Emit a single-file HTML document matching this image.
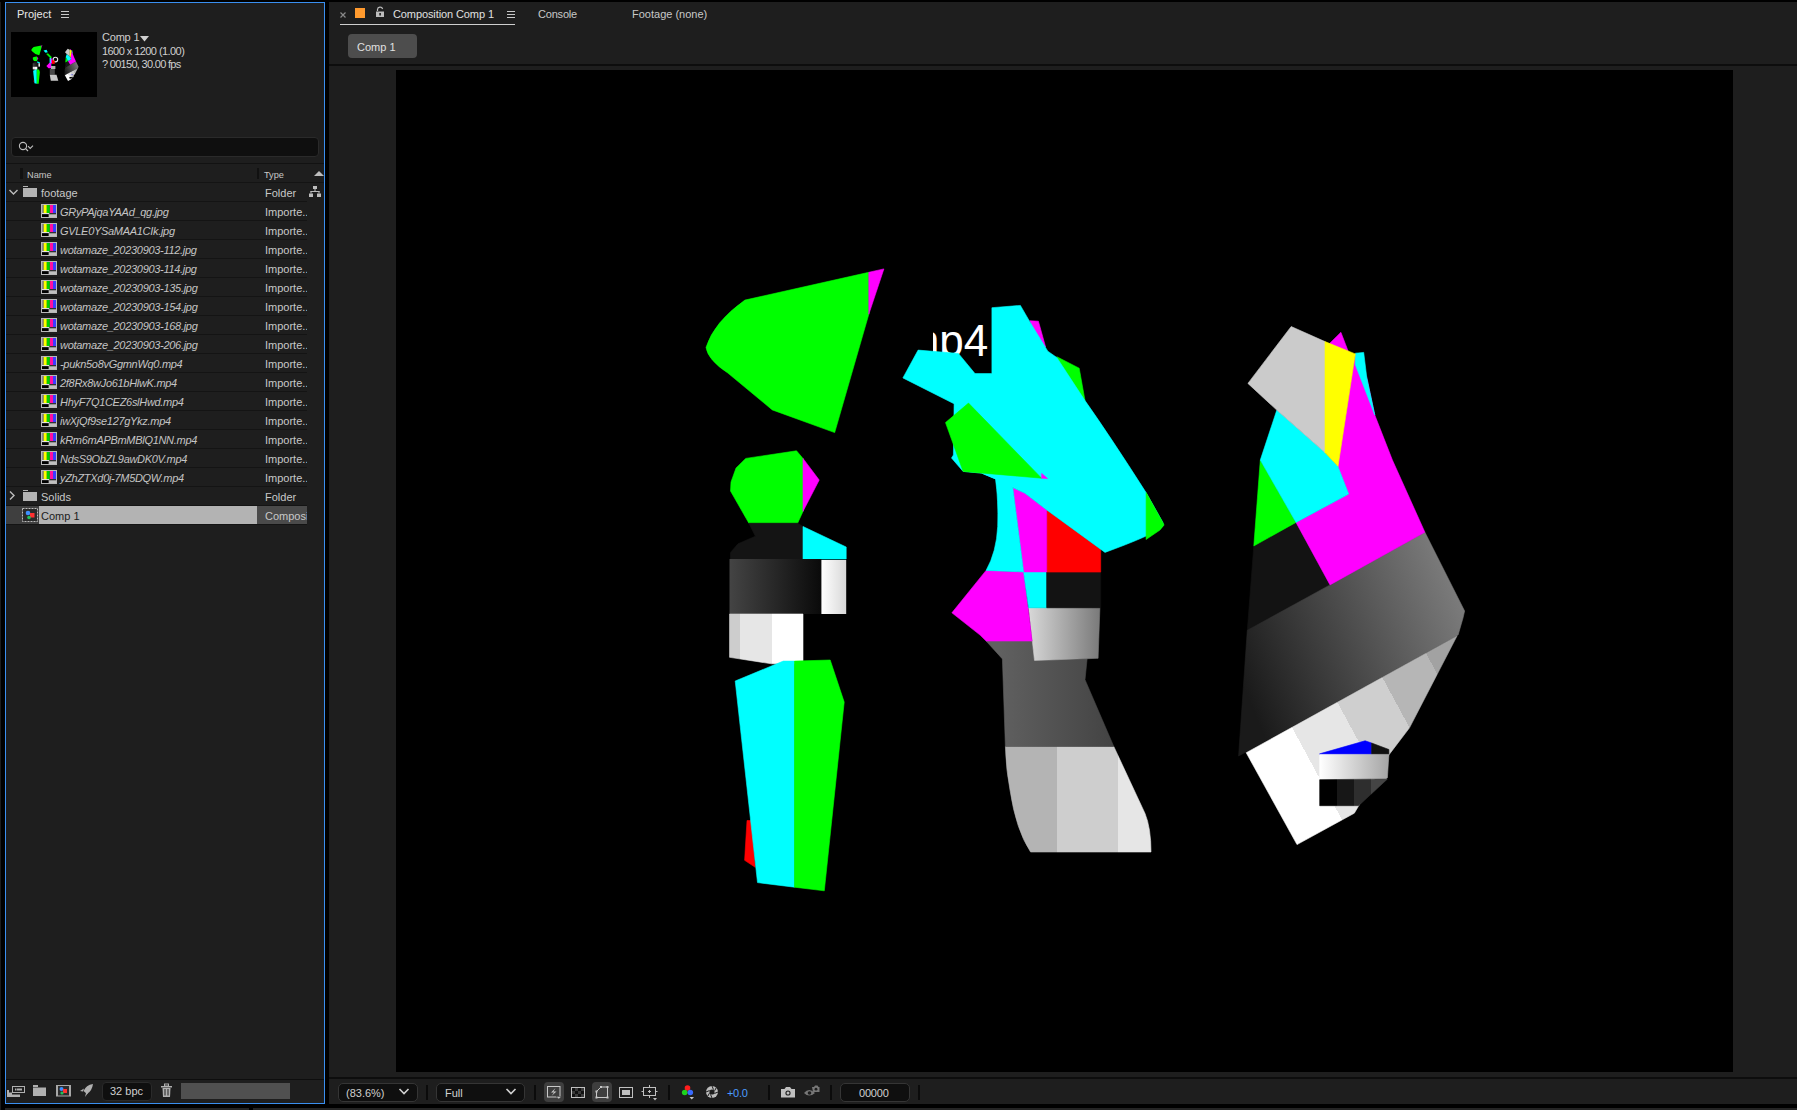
<!DOCTYPE html>
<html><head><meta charset="utf-8">
<style>
*{margin:0;padding:0;box-sizing:border-box}
html,body{width:1797px;height:1110px;overflow:hidden;background:#000;font-family:"Liberation Sans",sans-serif;color:#c8c8c8;position:relative}
.abs{position:absolute}
.t{position:absolute;white-space:nowrap;font-size:11px;line-height:13px}
.it{font-style:italic;color:#c4c4c4;letter-spacing:-0.3px}
.ic{position:absolute}
</style></head><body>
<!-- project panel -->
<div class="abs" style="left:5px;top:2px;width:320px;height:1102px;background:#1e1e1e;border:1px solid #3a8ff0"></div>
<div class="t" style="left:17px;top:8px;color:#e8e8e8">Project</div>
<svg class="ic" style="left:60px;top:10px" width="10" height="10"><rect x="1" y="1" width="8" height="1" fill="#c8c8c8"/><rect x="1" y="4" width="8" height="1" fill="#c8c8c8"/><rect x="1" y="7" width="8" height="1" fill="#c8c8c8"/></svg>
<div class="abs" style="left:11px;top:32px;width:86px;height:65px;background:#000"></div>
<div class="t" style="left:102px;top:31px;color:#cfcfcf;letter-spacing:-0.2px">Comp 1</div>
<svg class="ic" style="left:139px;top:35px" width="11" height="8"><path d="M1 1 L10 1 L5.5 6.5 Z" fill="#cfcfcf"/></svg>
<div class="t" style="left:102px;top:45px;color:#cfcfcf;letter-spacing:-0.56px">1600 x 1200 (1.00)</div>
<div class="t" style="left:102px;top:58px;color:#cfcfcf;letter-spacing:-0.7px">? 00150, 30.00 fps</div>
<div class="abs" style="left:11px;top:137px;width:308px;height:20px;background:#0f0f0f;border:1px solid #2a2a2a;border-radius:4px"></div>
<svg class="ic" style="left:17px;top:140px" width="20" height="14"><circle cx="6" cy="6" r="3.6" fill="none" stroke="#bdbdbd" stroke-width="1.1"/><path d="M8.6 8.6 L11 11" stroke="#bdbdbd" stroke-width="1.2"/><path d="M11 6.2 L13.2 8.4 L16 5.6" fill="none" stroke="#bdbdbd" stroke-width="1.1"/></svg>
<div class="abs" style="left:6px;top:163px;width:318px;height:1px;background:#121212"></div>
<div class="abs" style="left:20px;top:168px;width:3px;height:11px;background:#111"></div>
<div class="t" style="left:27px;top:169px;font-size:9.2px;color:#c8c8c8;letter-spacing:0px">Name</div>
<div class="abs" style="left:257px;top:168px;width:2px;height:11px;background:#111"></div>
<div class="t" style="left:264px;top:169px;font-size:9.2px;color:#c8c8c8">Type</div>
<svg class="ic" style="left:313px;top:170px" width="11" height="7"><path d="M1 6 L6 1 L11 6 Z" fill="#bdbdbd"/></svg>
<div class="abs" style="left:6px;top:182px;width:318px;height:1px;background:#141414"></div>
<div class="abs" style="left:6px;top:201px;width:301px;height:1px;background:#141414"></div>
<div class="abs" style="left:6px;top:220px;width:301px;height:1px;background:#141414"></div>
<div class="abs" style="left:6px;top:239px;width:301px;height:1px;background:#141414"></div>
<div class="abs" style="left:6px;top:258px;width:301px;height:1px;background:#141414"></div>
<div class="abs" style="left:6px;top:277px;width:301px;height:1px;background:#141414"></div>
<div class="abs" style="left:6px;top:296px;width:301px;height:1px;background:#141414"></div>
<div class="abs" style="left:6px;top:315px;width:301px;height:1px;background:#141414"></div>
<div class="abs" style="left:6px;top:334px;width:301px;height:1px;background:#141414"></div>
<div class="abs" style="left:6px;top:353px;width:301px;height:1px;background:#141414"></div>
<div class="abs" style="left:6px;top:372px;width:301px;height:1px;background:#141414"></div>
<div class="abs" style="left:6px;top:391px;width:301px;height:1px;background:#141414"></div>
<div class="abs" style="left:6px;top:410px;width:301px;height:1px;background:#141414"></div>
<div class="abs" style="left:6px;top:429px;width:301px;height:1px;background:#141414"></div>
<div class="abs" style="left:6px;top:448px;width:301px;height:1px;background:#141414"></div>
<div class="abs" style="left:6px;top:467px;width:301px;height:1px;background:#141414"></div>
<div class="abs" style="left:6px;top:486px;width:301px;height:1px;background:#141414"></div>
<div class="abs" style="left:6px;top:505px;width:301px;height:1px;background:#141414"></div>
<div class="abs" style="left:6px;top:524px;width:301px;height:1px;background:#141414"></div>
<div class="t" style="left:41px;top:187px;color:#c8c8c8">footage</div>
<div class="t" style="left:265px;top:187px;color:#c8c8c8">Folder</div>
<svg class="ic" style="left:41px;top:204px" width="16" height="14" viewBox="0 0 16 14"><rect x="0.5" y="0.5" width="15" height="13" fill="#2a2a2a" stroke="#b8b8b8"/><rect x="1" y="1" width="1.7" height="8" fill="#8a8a8a"/><rect x="2.7" y="1" width="3.1" height="8" fill="#ffff00"/><rect x="5.8" y="1" width="3.1" height="8" fill="#00d000"/><rect x="8.9" y="1" width="3.1" height="8" fill="#ff10a0"/><rect x="12" y="1" width="3" height="8" fill="#3c3cff"/><rect x="1" y="9" width="7.5" height="1.3" fill="#e0e0e0"/><rect x="8.5" y="9" width="6.5" height="1.3" fill="#303030"/><rect x="1" y="10.3" width="6.7" height="2.7" fill="#000"/><rect x="7.7" y="10.3" width="7.3" height="2.7" fill="#c0c0c0"/></svg>
<div class="t it" style="left:60px;top:206px">GRyPAjqaYAAd_qg.jpg</div>
<div class="abs" style="left:265px;top:206px;width:42px;height:14px;overflow:hidden"><div class="t" style="left:0;top:0;color:#c8c8c8">Importe..</div></div>
<svg class="ic" style="left:41px;top:223px" width="16" height="14" viewBox="0 0 16 14"><rect x="0.5" y="0.5" width="15" height="13" fill="#2a2a2a" stroke="#b8b8b8"/><rect x="1" y="1" width="1.7" height="8" fill="#8a8a8a"/><rect x="2.7" y="1" width="3.1" height="8" fill="#ffff00"/><rect x="5.8" y="1" width="3.1" height="8" fill="#00d000"/><rect x="8.9" y="1" width="3.1" height="8" fill="#ff10a0"/><rect x="12" y="1" width="3" height="8" fill="#3c3cff"/><rect x="1" y="9" width="7.5" height="1.3" fill="#e0e0e0"/><rect x="8.5" y="9" width="6.5" height="1.3" fill="#303030"/><rect x="1" y="10.3" width="6.7" height="2.7" fill="#000"/><rect x="7.7" y="10.3" width="7.3" height="2.7" fill="#c0c0c0"/></svg>
<div class="t it" style="left:60px;top:225px">GVLE0YSaMAA1CIk.jpg</div>
<div class="abs" style="left:265px;top:225px;width:42px;height:14px;overflow:hidden"><div class="t" style="left:0;top:0;color:#c8c8c8">Importe..</div></div>
<svg class="ic" style="left:41px;top:242px" width="16" height="14" viewBox="0 0 16 14"><rect x="0.5" y="0.5" width="15" height="13" fill="#2a2a2a" stroke="#b8b8b8"/><rect x="1" y="1" width="1.7" height="8" fill="#8a8a8a"/><rect x="2.7" y="1" width="3.1" height="8" fill="#ffff00"/><rect x="5.8" y="1" width="3.1" height="8" fill="#00d000"/><rect x="8.9" y="1" width="3.1" height="8" fill="#ff10a0"/><rect x="12" y="1" width="3" height="8" fill="#3c3cff"/><rect x="1" y="9" width="7.5" height="1.3" fill="#e0e0e0"/><rect x="8.5" y="9" width="6.5" height="1.3" fill="#303030"/><rect x="1" y="10.3" width="6.7" height="2.7" fill="#000"/><rect x="7.7" y="10.3" width="7.3" height="2.7" fill="#c0c0c0"/></svg>
<div class="t it" style="left:60px;top:244px">wotamaze_20230903-112.jpg</div>
<div class="abs" style="left:265px;top:244px;width:42px;height:14px;overflow:hidden"><div class="t" style="left:0;top:0;color:#c8c8c8">Importe..</div></div>
<svg class="ic" style="left:41px;top:261px" width="16" height="14" viewBox="0 0 16 14"><rect x="0.5" y="0.5" width="15" height="13" fill="#2a2a2a" stroke="#b8b8b8"/><rect x="1" y="1" width="1.7" height="8" fill="#8a8a8a"/><rect x="2.7" y="1" width="3.1" height="8" fill="#ffff00"/><rect x="5.8" y="1" width="3.1" height="8" fill="#00d000"/><rect x="8.9" y="1" width="3.1" height="8" fill="#ff10a0"/><rect x="12" y="1" width="3" height="8" fill="#3c3cff"/><rect x="1" y="9" width="7.5" height="1.3" fill="#e0e0e0"/><rect x="8.5" y="9" width="6.5" height="1.3" fill="#303030"/><rect x="1" y="10.3" width="6.7" height="2.7" fill="#000"/><rect x="7.7" y="10.3" width="7.3" height="2.7" fill="#c0c0c0"/></svg>
<div class="t it" style="left:60px;top:263px">wotamaze_20230903-114.jpg</div>
<div class="abs" style="left:265px;top:263px;width:42px;height:14px;overflow:hidden"><div class="t" style="left:0;top:0;color:#c8c8c8">Importe..</div></div>
<svg class="ic" style="left:41px;top:280px" width="16" height="14" viewBox="0 0 16 14"><rect x="0.5" y="0.5" width="15" height="13" fill="#2a2a2a" stroke="#b8b8b8"/><rect x="1" y="1" width="1.7" height="8" fill="#8a8a8a"/><rect x="2.7" y="1" width="3.1" height="8" fill="#ffff00"/><rect x="5.8" y="1" width="3.1" height="8" fill="#00d000"/><rect x="8.9" y="1" width="3.1" height="8" fill="#ff10a0"/><rect x="12" y="1" width="3" height="8" fill="#3c3cff"/><rect x="1" y="9" width="7.5" height="1.3" fill="#e0e0e0"/><rect x="8.5" y="9" width="6.5" height="1.3" fill="#303030"/><rect x="1" y="10.3" width="6.7" height="2.7" fill="#000"/><rect x="7.7" y="10.3" width="7.3" height="2.7" fill="#c0c0c0"/></svg>
<div class="t it" style="left:60px;top:282px">wotamaze_20230903-135.jpg</div>
<div class="abs" style="left:265px;top:282px;width:42px;height:14px;overflow:hidden"><div class="t" style="left:0;top:0;color:#c8c8c8">Importe..</div></div>
<svg class="ic" style="left:41px;top:299px" width="16" height="14" viewBox="0 0 16 14"><rect x="0.5" y="0.5" width="15" height="13" fill="#2a2a2a" stroke="#b8b8b8"/><rect x="1" y="1" width="1.7" height="8" fill="#8a8a8a"/><rect x="2.7" y="1" width="3.1" height="8" fill="#ffff00"/><rect x="5.8" y="1" width="3.1" height="8" fill="#00d000"/><rect x="8.9" y="1" width="3.1" height="8" fill="#ff10a0"/><rect x="12" y="1" width="3" height="8" fill="#3c3cff"/><rect x="1" y="9" width="7.5" height="1.3" fill="#e0e0e0"/><rect x="8.5" y="9" width="6.5" height="1.3" fill="#303030"/><rect x="1" y="10.3" width="6.7" height="2.7" fill="#000"/><rect x="7.7" y="10.3" width="7.3" height="2.7" fill="#c0c0c0"/></svg>
<div class="t it" style="left:60px;top:301px">wotamaze_20230903-154.jpg</div>
<div class="abs" style="left:265px;top:301px;width:42px;height:14px;overflow:hidden"><div class="t" style="left:0;top:0;color:#c8c8c8">Importe..</div></div>
<svg class="ic" style="left:41px;top:318px" width="16" height="14" viewBox="0 0 16 14"><rect x="0.5" y="0.5" width="15" height="13" fill="#2a2a2a" stroke="#b8b8b8"/><rect x="1" y="1" width="1.7" height="8" fill="#8a8a8a"/><rect x="2.7" y="1" width="3.1" height="8" fill="#ffff00"/><rect x="5.8" y="1" width="3.1" height="8" fill="#00d000"/><rect x="8.9" y="1" width="3.1" height="8" fill="#ff10a0"/><rect x="12" y="1" width="3" height="8" fill="#3c3cff"/><rect x="1" y="9" width="7.5" height="1.3" fill="#e0e0e0"/><rect x="8.5" y="9" width="6.5" height="1.3" fill="#303030"/><rect x="1" y="10.3" width="6.7" height="2.7" fill="#000"/><rect x="7.7" y="10.3" width="7.3" height="2.7" fill="#c0c0c0"/></svg>
<div class="t it" style="left:60px;top:320px">wotamaze_20230903-168.jpg</div>
<div class="abs" style="left:265px;top:320px;width:42px;height:14px;overflow:hidden"><div class="t" style="left:0;top:0;color:#c8c8c8">Importe..</div></div>
<svg class="ic" style="left:41px;top:337px" width="16" height="14" viewBox="0 0 16 14"><rect x="0.5" y="0.5" width="15" height="13" fill="#2a2a2a" stroke="#b8b8b8"/><rect x="1" y="1" width="1.7" height="8" fill="#8a8a8a"/><rect x="2.7" y="1" width="3.1" height="8" fill="#ffff00"/><rect x="5.8" y="1" width="3.1" height="8" fill="#00d000"/><rect x="8.9" y="1" width="3.1" height="8" fill="#ff10a0"/><rect x="12" y="1" width="3" height="8" fill="#3c3cff"/><rect x="1" y="9" width="7.5" height="1.3" fill="#e0e0e0"/><rect x="8.5" y="9" width="6.5" height="1.3" fill="#303030"/><rect x="1" y="10.3" width="6.7" height="2.7" fill="#000"/><rect x="7.7" y="10.3" width="7.3" height="2.7" fill="#c0c0c0"/></svg>
<div class="t it" style="left:60px;top:339px">wotamaze_20230903-206.jpg</div>
<div class="abs" style="left:265px;top:339px;width:42px;height:14px;overflow:hidden"><div class="t" style="left:0;top:0;color:#c8c8c8">Importe..</div></div>
<svg class="ic" style="left:41px;top:356px" width="16" height="14" viewBox="0 0 16 14"><rect x="0.5" y="0.5" width="15" height="13" fill="#2a2a2a" stroke="#b8b8b8"/><rect x="1" y="1" width="1.7" height="8" fill="#8a8a8a"/><rect x="2.7" y="1" width="3.1" height="8" fill="#ffff00"/><rect x="5.8" y="1" width="3.1" height="8" fill="#00d000"/><rect x="8.9" y="1" width="3.1" height="8" fill="#ff10a0"/><rect x="12" y="1" width="3" height="8" fill="#3c3cff"/><rect x="1" y="9" width="7.5" height="1.3" fill="#e0e0e0"/><rect x="8.5" y="9" width="6.5" height="1.3" fill="#303030"/><rect x="1" y="10.3" width="6.7" height="2.7" fill="#000"/><rect x="7.7" y="10.3" width="7.3" height="2.7" fill="#c0c0c0"/></svg>
<div class="t it" style="left:60px;top:358px">-pukn5o8vGgmnWq0.mp4</div>
<div class="abs" style="left:265px;top:358px;width:42px;height:14px;overflow:hidden"><div class="t" style="left:0;top:0;color:#c8c8c8">Importe..</div></div>
<svg class="ic" style="left:41px;top:375px" width="16" height="14" viewBox="0 0 16 14"><rect x="0.5" y="0.5" width="15" height="13" fill="#2a2a2a" stroke="#b8b8b8"/><rect x="1" y="1" width="1.7" height="8" fill="#8a8a8a"/><rect x="2.7" y="1" width="3.1" height="8" fill="#ffff00"/><rect x="5.8" y="1" width="3.1" height="8" fill="#00d000"/><rect x="8.9" y="1" width="3.1" height="8" fill="#ff10a0"/><rect x="12" y="1" width="3" height="8" fill="#3c3cff"/><rect x="1" y="9" width="7.5" height="1.3" fill="#e0e0e0"/><rect x="8.5" y="9" width="6.5" height="1.3" fill="#303030"/><rect x="1" y="10.3" width="6.7" height="2.7" fill="#000"/><rect x="7.7" y="10.3" width="7.3" height="2.7" fill="#c0c0c0"/></svg>
<div class="t it" style="left:60px;top:377px">2f8Rx8wJo61bHlwK.mp4</div>
<div class="abs" style="left:265px;top:377px;width:42px;height:14px;overflow:hidden"><div class="t" style="left:0;top:0;color:#c8c8c8">Importe..</div></div>
<svg class="ic" style="left:41px;top:394px" width="16" height="14" viewBox="0 0 16 14"><rect x="0.5" y="0.5" width="15" height="13" fill="#2a2a2a" stroke="#b8b8b8"/><rect x="1" y="1" width="1.7" height="8" fill="#8a8a8a"/><rect x="2.7" y="1" width="3.1" height="8" fill="#ffff00"/><rect x="5.8" y="1" width="3.1" height="8" fill="#00d000"/><rect x="8.9" y="1" width="3.1" height="8" fill="#ff10a0"/><rect x="12" y="1" width="3" height="8" fill="#3c3cff"/><rect x="1" y="9" width="7.5" height="1.3" fill="#e0e0e0"/><rect x="8.5" y="9" width="6.5" height="1.3" fill="#303030"/><rect x="1" y="10.3" width="6.7" height="2.7" fill="#000"/><rect x="7.7" y="10.3" width="7.3" height="2.7" fill="#c0c0c0"/></svg>
<div class="t it" style="left:60px;top:396px">HhyF7Q1CEZ6slHwd.mp4</div>
<div class="abs" style="left:265px;top:396px;width:42px;height:14px;overflow:hidden"><div class="t" style="left:0;top:0;color:#c8c8c8">Importe..</div></div>
<svg class="ic" style="left:41px;top:413px" width="16" height="14" viewBox="0 0 16 14"><rect x="0.5" y="0.5" width="15" height="13" fill="#2a2a2a" stroke="#b8b8b8"/><rect x="1" y="1" width="1.7" height="8" fill="#8a8a8a"/><rect x="2.7" y="1" width="3.1" height="8" fill="#ffff00"/><rect x="5.8" y="1" width="3.1" height="8" fill="#00d000"/><rect x="8.9" y="1" width="3.1" height="8" fill="#ff10a0"/><rect x="12" y="1" width="3" height="8" fill="#3c3cff"/><rect x="1" y="9" width="7.5" height="1.3" fill="#e0e0e0"/><rect x="8.5" y="9" width="6.5" height="1.3" fill="#303030"/><rect x="1" y="10.3" width="6.7" height="2.7" fill="#000"/><rect x="7.7" y="10.3" width="7.3" height="2.7" fill="#c0c0c0"/></svg>
<div class="t it" style="left:60px;top:415px">iwXjQf9se127gYkz.mp4</div>
<div class="abs" style="left:265px;top:415px;width:42px;height:14px;overflow:hidden"><div class="t" style="left:0;top:0;color:#c8c8c8">Importe..</div></div>
<svg class="ic" style="left:41px;top:432px" width="16" height="14" viewBox="0 0 16 14"><rect x="0.5" y="0.5" width="15" height="13" fill="#2a2a2a" stroke="#b8b8b8"/><rect x="1" y="1" width="1.7" height="8" fill="#8a8a8a"/><rect x="2.7" y="1" width="3.1" height="8" fill="#ffff00"/><rect x="5.8" y="1" width="3.1" height="8" fill="#00d000"/><rect x="8.9" y="1" width="3.1" height="8" fill="#ff10a0"/><rect x="12" y="1" width="3" height="8" fill="#3c3cff"/><rect x="1" y="9" width="7.5" height="1.3" fill="#e0e0e0"/><rect x="8.5" y="9" width="6.5" height="1.3" fill="#303030"/><rect x="1" y="10.3" width="6.7" height="2.7" fill="#000"/><rect x="7.7" y="10.3" width="7.3" height="2.7" fill="#c0c0c0"/></svg>
<div class="t it" style="left:60px;top:434px">kRm6mAPBmMBlQ1NN.mp4</div>
<div class="abs" style="left:265px;top:434px;width:42px;height:14px;overflow:hidden"><div class="t" style="left:0;top:0;color:#c8c8c8">Importe..</div></div>
<svg class="ic" style="left:41px;top:451px" width="16" height="14" viewBox="0 0 16 14"><rect x="0.5" y="0.5" width="15" height="13" fill="#2a2a2a" stroke="#b8b8b8"/><rect x="1" y="1" width="1.7" height="8" fill="#8a8a8a"/><rect x="2.7" y="1" width="3.1" height="8" fill="#ffff00"/><rect x="5.8" y="1" width="3.1" height="8" fill="#00d000"/><rect x="8.9" y="1" width="3.1" height="8" fill="#ff10a0"/><rect x="12" y="1" width="3" height="8" fill="#3c3cff"/><rect x="1" y="9" width="7.5" height="1.3" fill="#e0e0e0"/><rect x="8.5" y="9" width="6.5" height="1.3" fill="#303030"/><rect x="1" y="10.3" width="6.7" height="2.7" fill="#000"/><rect x="7.7" y="10.3" width="7.3" height="2.7" fill="#c0c0c0"/></svg>
<div class="t it" style="left:60px;top:453px">NdsS9ObZL9awDK0V.mp4</div>
<div class="abs" style="left:265px;top:453px;width:42px;height:14px;overflow:hidden"><div class="t" style="left:0;top:0;color:#c8c8c8">Importe..</div></div>
<svg class="ic" style="left:41px;top:470px" width="16" height="14" viewBox="0 0 16 14"><rect x="0.5" y="0.5" width="15" height="13" fill="#2a2a2a" stroke="#b8b8b8"/><rect x="1" y="1" width="1.7" height="8" fill="#8a8a8a"/><rect x="2.7" y="1" width="3.1" height="8" fill="#ffff00"/><rect x="5.8" y="1" width="3.1" height="8" fill="#00d000"/><rect x="8.9" y="1" width="3.1" height="8" fill="#ff10a0"/><rect x="12" y="1" width="3" height="8" fill="#3c3cff"/><rect x="1" y="9" width="7.5" height="1.3" fill="#e0e0e0"/><rect x="8.5" y="9" width="6.5" height="1.3" fill="#303030"/><rect x="1" y="10.3" width="6.7" height="2.7" fill="#000"/><rect x="7.7" y="10.3" width="7.3" height="2.7" fill="#c0c0c0"/></svg>
<div class="t it" style="left:60px;top:472px">yZhZTXd0j-7M5DQW.mp4</div>
<div class="abs" style="left:265px;top:472px;width:42px;height:14px;overflow:hidden"><div class="t" style="left:0;top:0;color:#c8c8c8">Importe..</div></div>
<div class="t" style="left:41px;top:491px;color:#c8c8c8">Solids</div>
<div class="t" style="left:265px;top:491px;color:#c8c8c8">Folder</div>
<!-- comp 1 row -->
<div class="abs" style="left:6px;top:506px;width:33px;height:18px;background:#3f3f3f"></div>
<div class="abs" style="left:39px;top:506px;width:218px;height:18px;background:#b3b3b3"></div>
<div class="abs" style="left:257px;top:506px;width:50px;height:18px;background:#4a4a4a"></div>
<div class="t" style="left:41px;top:510px;color:#1c1c1c">Comp 1</div>
<div class="abs" style="left:257px;top:506px;width:50px;height:18px;overflow:hidden"><div class="t" style="left:8px;top:4px;color:#c8c8c8">Composition</div></div>
<!-- list icons -->
<svg class="ic" style="left:8px;top:188px" width="12" height="9"><path d="M1.5 2 L5.5 6 L9.5 2" fill="none" stroke="#bdbdbd" stroke-width="1.4"/></svg>
<svg class="ic" style="left:22px;top:185px" width="16" height="13"><rect x="1" y="1" width="5" height="1" fill="#b4b4b4"/><rect x="1" y="3" width="14" height="9" fill="#b4b4b4"/></svg>
<svg class="ic" style="left:308px;top:185px" width="15" height="13"><rect x="5" y="1" width="4" height="3" fill="#bdbdbd"/><rect x="6.5" y="4" width="1" height="2.5" fill="#bdbdbd"/><rect x="2.5" y="6" width="9" height="1" fill="#bdbdbd"/><rect x="2.5" y="6" width="1" height="2.5" fill="#bdbdbd"/><rect x="10.5" y="6" width="1" height="2.5" fill="#bdbdbd"/><rect x="1" y="8.5" width="4" height="3.5" fill="#bdbdbd"/><rect x="9" y="8.5" width="4" height="3.5" fill="#bdbdbd"/></svg>
<svg class="ic" style="left:8px;top:490px" width="9" height="12"><path d="M2 1.5 L6 5.5 L2 9.5" fill="none" stroke="#bdbdbd" stroke-width="1.4"/></svg>
<svg class="ic" style="left:22px;top:489px" width="16" height="13"><rect x="1" y="1" width="5" height="1" fill="#b4b4b4"/><rect x="1" y="3" width="14" height="9" fill="#b4b4b4"/></svg>
<!-- footer icons -->
<svg class="ic" style="left:6px;top:1085px" width="20" height="13"><rect x="6.5" y="1.5" width="12" height="6" fill="#1e1e1e" stroke="#b0b0b0" stroke-width="1"/><rect x="9" y="3.5" width="1.5" height="2" fill="#b0b0b0"/><rect x="11" y="3.5" width="5" height="2" fill="#b0b0b0"/><rect x="1" y="5" width="2" height="7" fill="#b0b0b0"/><rect x="3" y="7.5" width="3" height="4.5" fill="#b0b0b0"/><rect x="6" y="9.5" width="8" height="2.5" fill="#b0b0b0"/></svg>
<svg class="ic" style="left:32px;top:1084px" width="15" height="13"><rect x="1" y="1" width="5" height="2" fill="#b0b0b0"/><rect x="1" y="3.5" width="13" height="8.5" fill="#b0b0b0"/></svg>
<svg class="ic" style="left:55px;top:1085px" width="17" height="12"><rect x="1.5" y="0.5" width="14" height="10.5" fill="#2c2c2c" stroke="#a8a8a8" stroke-width="1"/><rect x="1" y="1" width="2" height="10" fill="#a8a8a8"/><rect x="14" y="1" width="2" height="10" fill="#a8a8a8"/><circle cx="6.5" cy="4" r="2" fill="#3f8fff"/><rect x="8" y="4" width="4" height="4" fill="#ff3030"/><circle cx="7" cy="8" r="1.6" fill="#22c05a"/></svg>
<svg class="ic" style="left:79px;top:1083px" width="16" height="15"><path d="M14 1 Q7 2 4.5 8 L8 11 Q13 8 14 1 Z" fill="#b0b0b0"/><path d="M1 8 L5 5.5 L4 8.5 Z M6 14 L9 10 L7 10 Z" fill="#b0b0b0"/></svg>
<svg class="ic" style="left:160px;top:1083px" width="13" height="15"><rect x="1" y="3" width="11" height="1.5" fill="#b0b0b0"/><rect x="4.5" y="1" width="4" height="2" fill="none" stroke="#b0b0b0" stroke-width="1"/><path d="M2.5 5 L3 14 L10 14 L10.5 5 Z" fill="#b0b0b0"/><rect x="4.5" y="6" width="1" height="6.5" fill="#1e1e1e"/><rect x="7.5" y="6" width="1" height="6.5" fill="#1e1e1e"/></svg>
<!-- comp icon -->
<svg class="ic" style="left:22px;top:508px" width="16" height="14"><rect x="0.5" y="0.5" width="15" height="13" fill="#2a2a2a" stroke="#bdbdbd" stroke-width="1" stroke-dasharray="2 1"/><circle cx="6" cy="5" r="2.3" fill="#3f8fff"/><rect x="8" y="5" width="4.5" height="4.5" fill="#ff3030"/><circle cx="7" cy="9.5" r="1.8" fill="#22c05a"/></svg>
<!-- footer -->
<div class="abs" style="left:6px;top:1079px;width:318px;height:1px;background:#0e0e0e"></div>
<div class="abs" style="left:102px;top:1082px;width:50px;height:19px;background:#0f0f0f;border:1px solid #2a2a2a;border-radius:4px"></div>
<div class="t" style="left:110px;top:1085px;color:#d0d0d0">32 bpc</div>
<div class="abs" style="left:181px;top:1083px;width:109px;height:16px;background:#505050"></div>
<!-- comp panel -->
<div class="abs" style="left:329px;top:2px;width:1468px;height:1102px;background:#1e1e1e"></div>
<!-- tab header -->
<svg class="ic" style="left:339px;top:11px" width="8" height="8"><path d="M1.5 1.5 L6.5 6.5 M6.5 1.5 L1.5 6.5" stroke="#8a8a8a" stroke-width="1.2"/></svg>
<div class="abs" style="left:355px;top:8px;width:10px;height:10px;background:#ff9a2e"></div>
<svg class="ic" style="left:375px;top:6px" width="10" height="12"><path d="M2.5 5 L2.5 3.5 A2.6 2.6 0 0 1 7.6 3" fill="none" stroke="#bdbdbd" stroke-width="1.2"/><rect x="1" y="5.5" width="8" height="5.5" fill="#bdbdbd"/><rect x="4.3" y="7" width="1.6" height="2.5" fill="#1e1e1e"/></svg>
<div class="t" style="left:393px;top:8px;color:#e0e0e0;letter-spacing:-0.1px">Composition Comp 1</div>
<svg class="ic" style="left:506px;top:10px" width="10" height="9"><rect x="1" y="1" width="8" height="1" fill="#c8c8c8"/><rect x="1" y="4" width="8" height="1" fill="#c8c8c8"/><rect x="1" y="7" width="8" height="1" fill="#c8c8c8"/></svg>
<div class="abs" style="left:340px;top:24px;width:175px;height:1px;background:#cfcfcf"></div>
<div class="t" style="left:538px;top:8px;color:#c8c8c8;letter-spacing:-0.2px">Console</div>
<div class="t" style="left:632px;top:8px;color:#c8c8c8">Footage (none)</div>
<div class="abs" style="left:348px;top:34px;width:69px;height:24px;background:#4d4d4d;border-radius:4px"></div>
<div class="t" style="left:357px;top:41px;color:#e0e0e0">Comp 1</div>
<div class="abs" style="left:329px;top:64px;width:1468px;height:2px;background:#0d0d0d"></div>
<!-- viewer -->
<div class="abs" style="left:396px;top:70px;width:1337px;height:1002px;background:#000"></div>
<svg class="abs" style="left:0;top:0" width="1797" height="1110" viewBox="0 0 1797 1110">
<defs>
<filter id="thb" x="-10%" y="-10%" width="120%" height="120%"><feGaussianBlur stdDeviation="5"/></filter>
<filter id="thb2" x="-20%" y="-20%" width="140%" height="140%"><feGaussianBlur stdDeviation="0.3"/></filter>
<clipPath id="vc"><rect x="396" y="70" width="1337" height="1002"/></clipPath>
<linearGradient id="gA1" x1="729.5" y1="0" x2="821.4" y2="0" gradientUnits="userSpaceOnUse"><stop offset="0" stop-color="#444"/><stop offset="1" stop-color="#0a0a0a"/></linearGradient>
<linearGradient id="gA2" x1="821.4" y1="0" x2="846.2" y2="0" gradientUnits="userSpaceOnUse"><stop offset="0" stop-color="#fff"/><stop offset="1" stop-color="#d8d8d8"/></linearGradient>
<linearGradient id="gA3" x1="729.5" y1="0" x2="803" y2="0" gradientUnits="userSpaceOnUse"><stop offset="0.147" stop-color="#cdcdcd"/><stop offset="0.147" stop-color="#e6e6e6"/><stop offset="0.573" stop-color="#e6e6e6"/><stop offset="0.573" stop-color="#fff"/></linearGradient>
<linearGradient id="gB1" x1="1005" y1="0" x2="1151" y2="0" gradientUnits="userSpaceOnUse"><stop offset="0.353" stop-color="#b4b4b4"/><stop offset="0.353" stop-color="#cecece"/><stop offset="0.772" stop-color="#cecece"/><stop offset="0.772" stop-color="#e6e6e6"/></linearGradient>
<linearGradient id="gB2" x1="1000" y1="0" x2="1110" y2="0" gradientUnits="userSpaceOnUse"><stop offset="0" stop-color="#606060"/><stop offset="1" stop-color="#444"/></linearGradient>
<linearGradient id="gB3" x1="1030" y1="0" x2="1100" y2="0" gradientUnits="userSpaceOnUse"><stop offset="0" stop-color="#d6d6d6"/><stop offset="1" stop-color="#7a7a7a"/></linearGradient>
<linearGradient id="gC1" x1="1245" y1="690" x2="1462" y2="600" gradientUnits="userSpaceOnUse"><stop offset="0" stop-color="#1a1a1a"/><stop offset="1" stop-color="#7c7c7c"/></linearGradient>
<linearGradient id="gC2" x1="650.3" y1="-351.8" x2="862.4" y2="-466.5" gradientUnits="userSpaceOnUse"><stop offset="0.212" stop-color="#fff"/><stop offset="0.212" stop-color="#e6e6e6"/><stop offset="0.427" stop-color="#e6e6e6"/><stop offset="0.427" stop-color="#cfcfcf"/><stop offset="0.64" stop-color="#cfcfcf"/><stop offset="0.64" stop-color="#b6b6b6"/><stop offset="0.847" stop-color="#b6b6b6"/><stop offset="0.847" stop-color="#a2a2a2"/></linearGradient>
<clipPath id="tc"><rect x="933" y="300" width="60" height="60"/></clipPath>
<linearGradient id="gC3" x1="1319.7" y1="0" x2="1388.9" y2="0" gradientUnits="userSpaceOnUse"><stop offset="0" stop-color="#fff"/><stop offset="1" stop-color="#a5a5a5"/></linearGradient>
<linearGradient id="gC4" x1="1319.7" y1="0" x2="1388" y2="0" gradientUnits="userSpaceOnUse"><stop offset="0.25" stop-color="#000"/><stop offset="0.25" stop-color="#171717"/><stop offset="0.5" stop-color="#171717"/><stop offset="0.5" stop-color="#2e2e2e"/><stop offset="0.75" stop-color="#2e2e2e"/><stop offset="0.75" stop-color="#444"/></linearGradient>
</defs>
<g clip-path="url(#vc)">
<g id="figs">
<g id="figA">
<!-- Figure A -->
<path fill="#00ff00" stroke="#00ff00" stroke-width="0.6" stroke-linejoin="round" d="M868.8,272.3 L744.9,300.1 Q714,322 706,347.4 Q708,360 727.8,373 L772.3,409.9 L834.7,432.6 L868.8,314.3 Z"/>
<polygon fill="#ff00ff" stroke="#ff00ff" stroke-width="0.6" stroke-linejoin="round" points="868.8,272.3 883.9,268.9 868.8,314.3"/>
<polygon fill="#00ff00" stroke="#00ff00" stroke-width="0.6" stroke-linejoin="round" points="745.7,458.4 796.5,450.8 803,458.4 803,511.4 797.6,523.2 748.9,523.2 730.5,491 731,482 736,468.1"/>
<polygon fill="#ff00ff" stroke="#ff00ff" stroke-width="0.6" stroke-linejoin="round" points="803,458.4 819.2,480 803,511.4"/>
<polygon fill="#141414" stroke="#141414" stroke-width="0.6" stroke-linejoin="round" points="748.9,523.2 797.6,523.2 803,526.5 803,559 730.5,559 730.5,552.4 738,543.8 755.4,536.2"/>
<polygon fill="#00ffff" stroke="#00ffff" stroke-width="0.6" stroke-linejoin="round" points="803,526.5 846.2,547 846.2,559 803,559"/>
<rect x="729.5" y="559" width="91.9" height="55" fill="url(#gA1)"/>
<rect x="821.4" y="560" width="24.8" height="54" fill="url(#gA2)"/>
<polygon fill="url(#gA3)" stroke="url(#gA3)" stroke-width="0.6" stroke-linejoin="round" points="729.5,614 803,614 803,663.8 771.6,663.8 729.5,657.3"/>
<polygon fill="#ff0000" stroke="#ff0000" stroke-width="0.6" stroke-linejoin="round" points="747,820.5 751.6,820.5 755.2,867.3 744.6,860.3"/>
<polygon fill="#00ffff" stroke="#00ffff" stroke-width="0.6" stroke-linejoin="round" points="735.2,681 783.3,661.1 794.5,661.1 794.5,887.2 757.5,882.6"/>
<polygon fill="#00ff00" stroke="#00ff00" stroke-width="0.6" stroke-linejoin="round" points="794.5,661.1 830.2,660 844.2,702.1 824.3,890.8 794.5,887.2"/>
</g>
<g id="figB">
<!-- Figure B -->
<path fill="url(#gB1)" stroke="url(#gB1)" stroke-width="0.6" stroke-linejoin="round" d="M1005.4,746.5 L1113.8,746.5 L1145,813.4 Q1151,828 1151,852 L1030.6,852 Q1016,830 1010,790 Q1006,770 1005.4,746.5 Z"/>
<polygon fill="url(#gB2)" stroke="url(#gB2)" stroke-width="0.6" stroke-linejoin="round" points="986.1,641 1032.1,641 1034.5,660.4 1087.1,658.9 1085,679.7 1113.8,746.5 1005.4,746.5 1002.4,658.9"/>
<polygon fill="url(#gB3)" stroke="url(#gB3)" stroke-width="0.6" stroke-linejoin="round" points="1028.6,607.8 1099.9,607.8 1098.1,658.3 1034.5,660.4"/>
<polygon fill="#ff00ff" stroke="#ff00ff" stroke-width="0.6" stroke-linejoin="round" points="986.1,570.4 1023.6,571.9 1032.1,641 986.1,641 980.1,635.1 951.9,612.8"/>
<polygon fill="#00ffff" stroke="#00ffff" stroke-width="0.6" stroke-linejoin="round" points="1023.6,571.9 1046.7,571.9 1046.7,607.8 1028.6,607.8"/>
<polygon fill="#131313" stroke="#131313" stroke-width="0.6" stroke-linejoin="round" points="1046.7,572.1 1100.7,572.1 1100.7,607.8 1046.7,607.8"/>
<polygon fill="#ff0000" stroke="#ff0000" stroke-width="0.6" stroke-linejoin="round" points="1046.7,509.9 1100.7,549.5 1100.7,572.1 1046.7,572.1"/>
<polygon fill="#ff00ff" stroke="#ff00ff" stroke-width="0.6" stroke-linejoin="round" points="1012.8,487.6 1025,493.3 1046.7,509.9 1046.7,571.9 1023.6,571.9"/>
<path fill="#00ffff" stroke="#00ffff" stroke-width="0.6" stroke-linejoin="round" d="M981.8,473.2 L995.5,478.9 Q998.5,500 997.7,526.5 Q996.5,552 986.1,570.4 L1023.6,571.9 L1012.8,487.6 L995,470 Z"/>
<text x="988.3" y="355.5" text-anchor="end" font-family="Liberation Sans" font-size="44" fill="#fff" clip-path="url(#tc)">mp4</text>
<polygon fill="#ff00ff" stroke="#ff00ff" stroke-width="0.6" stroke-linejoin="round" points="1029.8,320.7 1038.4,321.2 1045.6,346.9 1040,350"/>
<polygon fill="#00ff00" stroke="#00ff00" stroke-width="0.6" stroke-linejoin="round" points="1056.8,356.7 1079.2,368.2 1085,400.6 1060,370"/>
<path fill="#00ffff" stroke="#00ffff" stroke-width="0.6" stroke-linejoin="round" d="M991.9,307.7 L1020.4,305.4 L1029.8,321.7 L1047.8,351.2 L1056.8,357.5 L1085,400.6 Q1110,436 1146.1,492.6 L1162.7,522.2 Q1164.5,525 1161,528 Q1150,536 1105,552.4 L1046.7,509.9 L1025,493.3 L1012.8,487.6 L995.5,478.9 L981.8,473.2 L963.1,471.4 L951.5,458 L953.4,455 L954.1,403.8 L902.9,377.9 L918.1,350.1 L958.4,353.4 L975,373.6 L991.9,373.6 Z"/>
<polygon fill="#00ff00" stroke="#00ff00" stroke-width="0.6" stroke-linejoin="round" points="1146.1,492.6 1162.7,522.2 1164.1,525 1160,530 1146.1,539.5"/>
<polygon fill="#00ff00" stroke="#00ff00" stroke-width="0.6" stroke-linejoin="round" points="945.5,422.6 968.5,403.1 1041.6,478.2 963.1,471.4"/>
<polygon fill="#ff00ff" stroke="#ff00ff" stroke-width="0.6" stroke-linejoin="round" points="1041.7,473.4 1047.5,478.5 1041.6,478.2"/>
</g>
<g id="figC">
<!-- Figure C -->
<polygon fill="#131313" stroke="#131313" stroke-width="0.6" stroke-linejoin="round" points="1253.8,546 1296,522.4 1330,584.9 1247.3,630.3"/>
<polygon fill="url(#gC1)" stroke="url(#gC1)" stroke-width="0.6" stroke-linejoin="round" points="1330,584.9 1424.9,532.2 1464.6,611 1463,618 1458.1,634.9 1238.6,756 1247.3,630.3"/>
<polygon fill="url(#gC2)" stroke="url(#gC2)" stroke-width="0.6" stroke-linejoin="round" points="1246.2,752.7 1457,636 1409.5,727.8 1388.9,754.9 1354.3,813.2 1297,844.6"/>
<polygon fill="#00ff00" stroke="#00ff00" stroke-width="0.6" stroke-linejoin="round" points="1260.3,460 1296,522.4 1253.8,546"/>
<polygon fill="#ff00ff" stroke="#ff00ff" stroke-width="0.6" stroke-linejoin="round" points="1296,522.4 1348.7,494.1 1337.5,466.4 1355.3,353.9 1366.8,377.7 1374.8,415.1 1392.4,460 1424.9,532.2 1330,584.9"/>
<polygon fill="#00ffff" stroke="#00ffff" stroke-width="0.6" stroke-linejoin="round" points="1355.3,353.2 1363.7,352.4 1366.8,377.7 1374.8,415.1 1355.3,364.7"/>
<polygon fill="#00ffff" stroke="#00ffff" stroke-width="0.6" stroke-linejoin="round" points="1276.8,410.1 1325,452.6 1338,466.3 1337.3,464.9 1348.7,494.1 1296,522.4 1260.3,460"/>
<polygon fill="#ff00ff" stroke="#ff00ff" stroke-width="0.6" stroke-linejoin="round" points="1327,346 1340.9,332.3 1350,356"/>
<polygon fill="#cbcbcb" stroke="#cbcbcb" stroke-width="0.6" stroke-linejoin="round" points="1291.2,326.5 1325,341.6 1325,452.6 1276.8,410.1 1247.9,383.4"/>
<polygon fill="#ffff00" stroke="#ffff00" stroke-width="0.6" stroke-linejoin="round" points="1325,341.6 1355.3,353.9 1338,466.3 1325,452.6"/>
<polygon fill="#0000ff" stroke="#0000ff" stroke-width="0.6" stroke-linejoin="round" points="1319.7,753.8 1365.1,740.8 1371.6,743 1371.6,754.4 1319.7,754.4"/>
<polygon fill="#111" stroke="#111" stroke-width="0.6" stroke-linejoin="round" points="1371.6,743 1388.9,749.5 1388.9,754.4 1371.6,754.4"/>
<polygon fill="url(#gC3)" stroke="url(#gC3)" stroke-width="0.6" stroke-linejoin="round" points="1319.7,754.4 1388.9,754.4 1387.4,777.6 1386,779 1319.7,779"/>
<polygon fill="url(#gC4)" stroke="url(#gC4)" stroke-width="0.6" stroke-linejoin="round" points="1319.7,779.7 1387.4,779 1358.6,805.7 1319.7,805.7"/>
</g>
</g>
</g>
<g transform="translate(12,32.8) scale(0.0622) translate(-396,-70)" filter="url(#thb)"><use href="#figA"/><use href="#figC"/></g>
<g filter="url(#thb2)">
<path d="M43.5 50.5 L46.5 49.8 L47.8 52.2 L45.5 52.8 Z" fill="#00ffff"/>
<path d="M46.2 54 L48 53.2 L52 57.2 L50.5 58.5 Z" fill="#00ee00"/>
<circle cx="55.4" cy="59.6" r="2.3" fill="none" stroke="#e8e8e8" stroke-width="1.1"/>
<rect x="49.6" y="58" width="1.6" height="8" fill="#00ffff"/>
<rect x="50.8" y="58.5" width="1.5" height="5" fill="#ff00ff"/>
<rect x="52" y="60.3" width="2.7" height="3.6" fill="#ff0000"/>
<path d="M46.4 66 L49.5 62.8 L51.2 63.5 L51.2 68.2 L48.5 68.2 Z" fill="#ff00ff"/>
<rect x="51" y="66" width="4.4" height="3" fill="#b0b0b0"/>
<rect x="49.8" y="69" width="5" height="5.7" fill="#4a4a4a"/>
<path d="M49.8 74.7 L56.5 74.7 L58.3 80.8 L50.8 80.8 Z" fill="#c8c8c8"/>
</g>
</svg>

<div class="abs" style="left:329px;top:1077px;width:1468px;height:2px;background:#0d0d0d"></div>
<!-- bottom toolbar -->
<div class="abs" style="left:338px;top:1083px;width:80px;height:19px;background:#0f0f0f;border:1px solid #353535;border-radius:5px"></div>
<div class="t" style="left:346px;top:1087px;color:#d0d0d0">(83.6%)</div>
<svg class="ic" style="left:398px;top:1087px" width="12" height="9"><path d="M1.5 2 L6 6.5 L10.5 2" fill="none" stroke="#d0d0d0" stroke-width="1.6"/></svg>
<div class="abs" style="left:426px;top:1085px;width:2px;height:15px;background:#0b0b0b"></div>
<div class="abs" style="left:436px;top:1083px;width:89px;height:19px;background:#0f0f0f;border:1px solid #353535;border-radius:5px"></div>
<div class="t" style="left:445px;top:1087px;color:#d0d0d0">Full</div>
<svg class="ic" style="left:505px;top:1087px" width="12" height="9"><path d="M1.5 2 L6 6.5 L10.5 2" fill="none" stroke="#d0d0d0" stroke-width="1.6"/></svg>
<div class="abs" style="left:534px;top:1085px;width:2px;height:15px;background:#0b0b0b"></div>
<div class="abs" style="left:544px;top:1082px;width:20px;height:20px;background:#3e3e3e;border-radius:4px"></div>
<svg class="ic" style="left:546px;top:1084px" width="16" height="16"><rect x="1.5" y="2.5" width="12.5" height="10.5" fill="none" stroke="#c8c8c8" stroke-width="1"/><path d="M9.5 4 L5 8.5 L8 8.5 L5.5 12 L10.5 7.5 L7.5 7.5 Z" fill="#c8c8c8"/><path d="M10 12.5 L15.5 12.5 L12.75 15 Z" fill="#c8c8c8" stroke="#3e3e3e" stroke-width="0.6"/></svg>
<svg class="ic" style="left:570px;top:1086px" width="16" height="13"><rect x="1.5" y="1.5" width="13" height="10" fill="#3a3a3a" stroke="#c0c0c0" stroke-width="1"/><rect x="2" y="2" width="3" height="3" fill="#111"/><rect x="8" y="2" width="3" height="3" fill="#111"/><rect x="5" y="5" width="3" height="3" fill="#111"/><rect x="11" y="5" width="3" height="3" fill="#111"/><rect x="2" y="8" width="3" height="3" fill="#111"/><rect x="8" y="8" width="3" height="3" fill="#111"/></svg>
<div class="abs" style="left:592px;top:1082px;width:20px;height:20px;background:#3e3e3e;border-radius:4px"></div>
<svg class="ic" style="left:594px;top:1084px" width="16" height="16"><path d="M2.5 13.5 L2.5 7.5 L7 3 L13.5 3 L13.5 13.5 Z" fill="none" stroke="#c8c8c8" stroke-width="1"/><rect x="1.5" y="12.5" width="2" height="2" fill="#c8c8c8"/><rect x="12.5" y="12.5" width="2" height="2" fill="#c8c8c8"/><rect x="12.5" y="2" width="2" height="2" fill="#c8c8c8"/><rect x="6" y="2" width="2" height="2" fill="#c8c8c8"/><rect x="1.5" y="6.5" width="2" height="2" fill="#c8c8c8"/></svg>
<svg class="ic" style="left:618px;top:1086px" width="16" height="13"><rect x="1.5" y="1.5" width="13" height="10" fill="none" stroke="#c0c0c0" stroke-width="1"/><rect x="4" y="4" width="8" height="5" fill="#c0c0c0"/></svg>
<svg class="ic" style="left:641px;top:1083px" width="17" height="18"><rect x="2.5" y="4.5" width="12" height="8" fill="none" stroke="#c0c0c0" stroke-width="1"/><path d="M8.5 2 L8.5 4.5 M8.5 12.5 L8.5 15 M0.5 8.5 L2.5 8.5 M14.5 8.5 L16.5 8.5 M8.5 7 L8.5 10 M7 8.5 L10 8.5" stroke="#c0c0c0" stroke-width="1"/><path d="M12 15 L16 15 L14 17.5 Z" fill="#c0c0c0"/></svg>
<div class="abs" style="left:668px;top:1085px;width:2px;height:15px;background:#0b0b0b"></div>
<svg class="ic" style="left:680px;top:1083px" width="16" height="18"><circle cx="7.5" cy="5" r="2.8" fill="#ff1d1d"/><circle cx="4.7" cy="9.5" r="2.8" fill="#1dd31d"/><circle cx="10.3" cy="9.5" r="2.8" fill="#3a6bff"/><path d="M9.5 14 L14 14 L11.75 16.5 Z" fill="#c8c8c8"/></svg>
<svg class="ic" style="left:705px;top:1085px" width="14" height="14"><circle cx="7" cy="7" r="6" fill="#bdbdbd"/><circle cx="7" cy="7" r="2.6" fill="#1e1e1e"/><path d="M7 1 L8.5 4.6 M13 7 L9.4 8.5 M7 13 L5.5 9.4 M1 7 L4.6 5.5 M11.2 2.8 L9.6 5.8 M2.8 11.2 L4.4 8.2" stroke="#1e1e1e" stroke-width="1"/></svg>
<div class="t" style="left:727px;top:1087px;color:#4b9cff;letter-spacing:-0.3px">+0.0</div>
<div class="abs" style="left:768px;top:1085px;width:2px;height:15px;background:#0b0b0b"></div>
<svg class="ic" style="left:780px;top:1086px" width="16" height="12"><path d="M1 3 L4.5 3 L6 1 L10 1 L11.5 3 L15 3 L15 11.5 L1 11.5 Z" fill="#c0c0c0"/><circle cx="8" cy="7" r="2.6" fill="#1e1e1e"/><circle cx="8" cy="7" r="1.5" fill="#c0c0c0"/></svg>
<svg class="ic" style="left:803px;top:1084px" width="17" height="14"><path d="M1 9 Q6 3 12 9 Q6 14 1 9 Z" fill="#777"/><circle cx="6.5" cy="9" r="1.8" fill="#1e1e1e"/><path d="M9 3 L11 3 L12 1.5 L14.5 1.5 L15.5 3 L16.5 3 L16.5 8 L10 8 Z" fill="#777"/><circle cx="13" cy="5.2" r="1.4" fill="#1e1e1e"/></svg>
<div class="abs" style="left:830px;top:1085px;width:2px;height:15px;background:#0b0b0b"></div>
<div class="abs" style="left:840px;top:1083px;width:70px;height:19px;background:#0f0f0f;border:1px solid #353535;border-radius:5px"></div>
<div class="t" style="left:859px;top:1087px;color:#d0d0d0;letter-spacing:-0.2px">00000</div>
<div class="abs" style="left:918px;top:1085px;width:2px;height:15px;background:#0b0b0b"></div>

<div class="abs" style="left:5px;top:1108px;width:244px;height:2px;background:#242424"></div>
<div class="abs" style="left:0;top:2px;width:1px;height:1108px;background:#1c1c1c"></div>
<div class="abs" style="left:253px;top:1108px;width:1544px;height:2px;background:#242424"></div>
</body></html>
